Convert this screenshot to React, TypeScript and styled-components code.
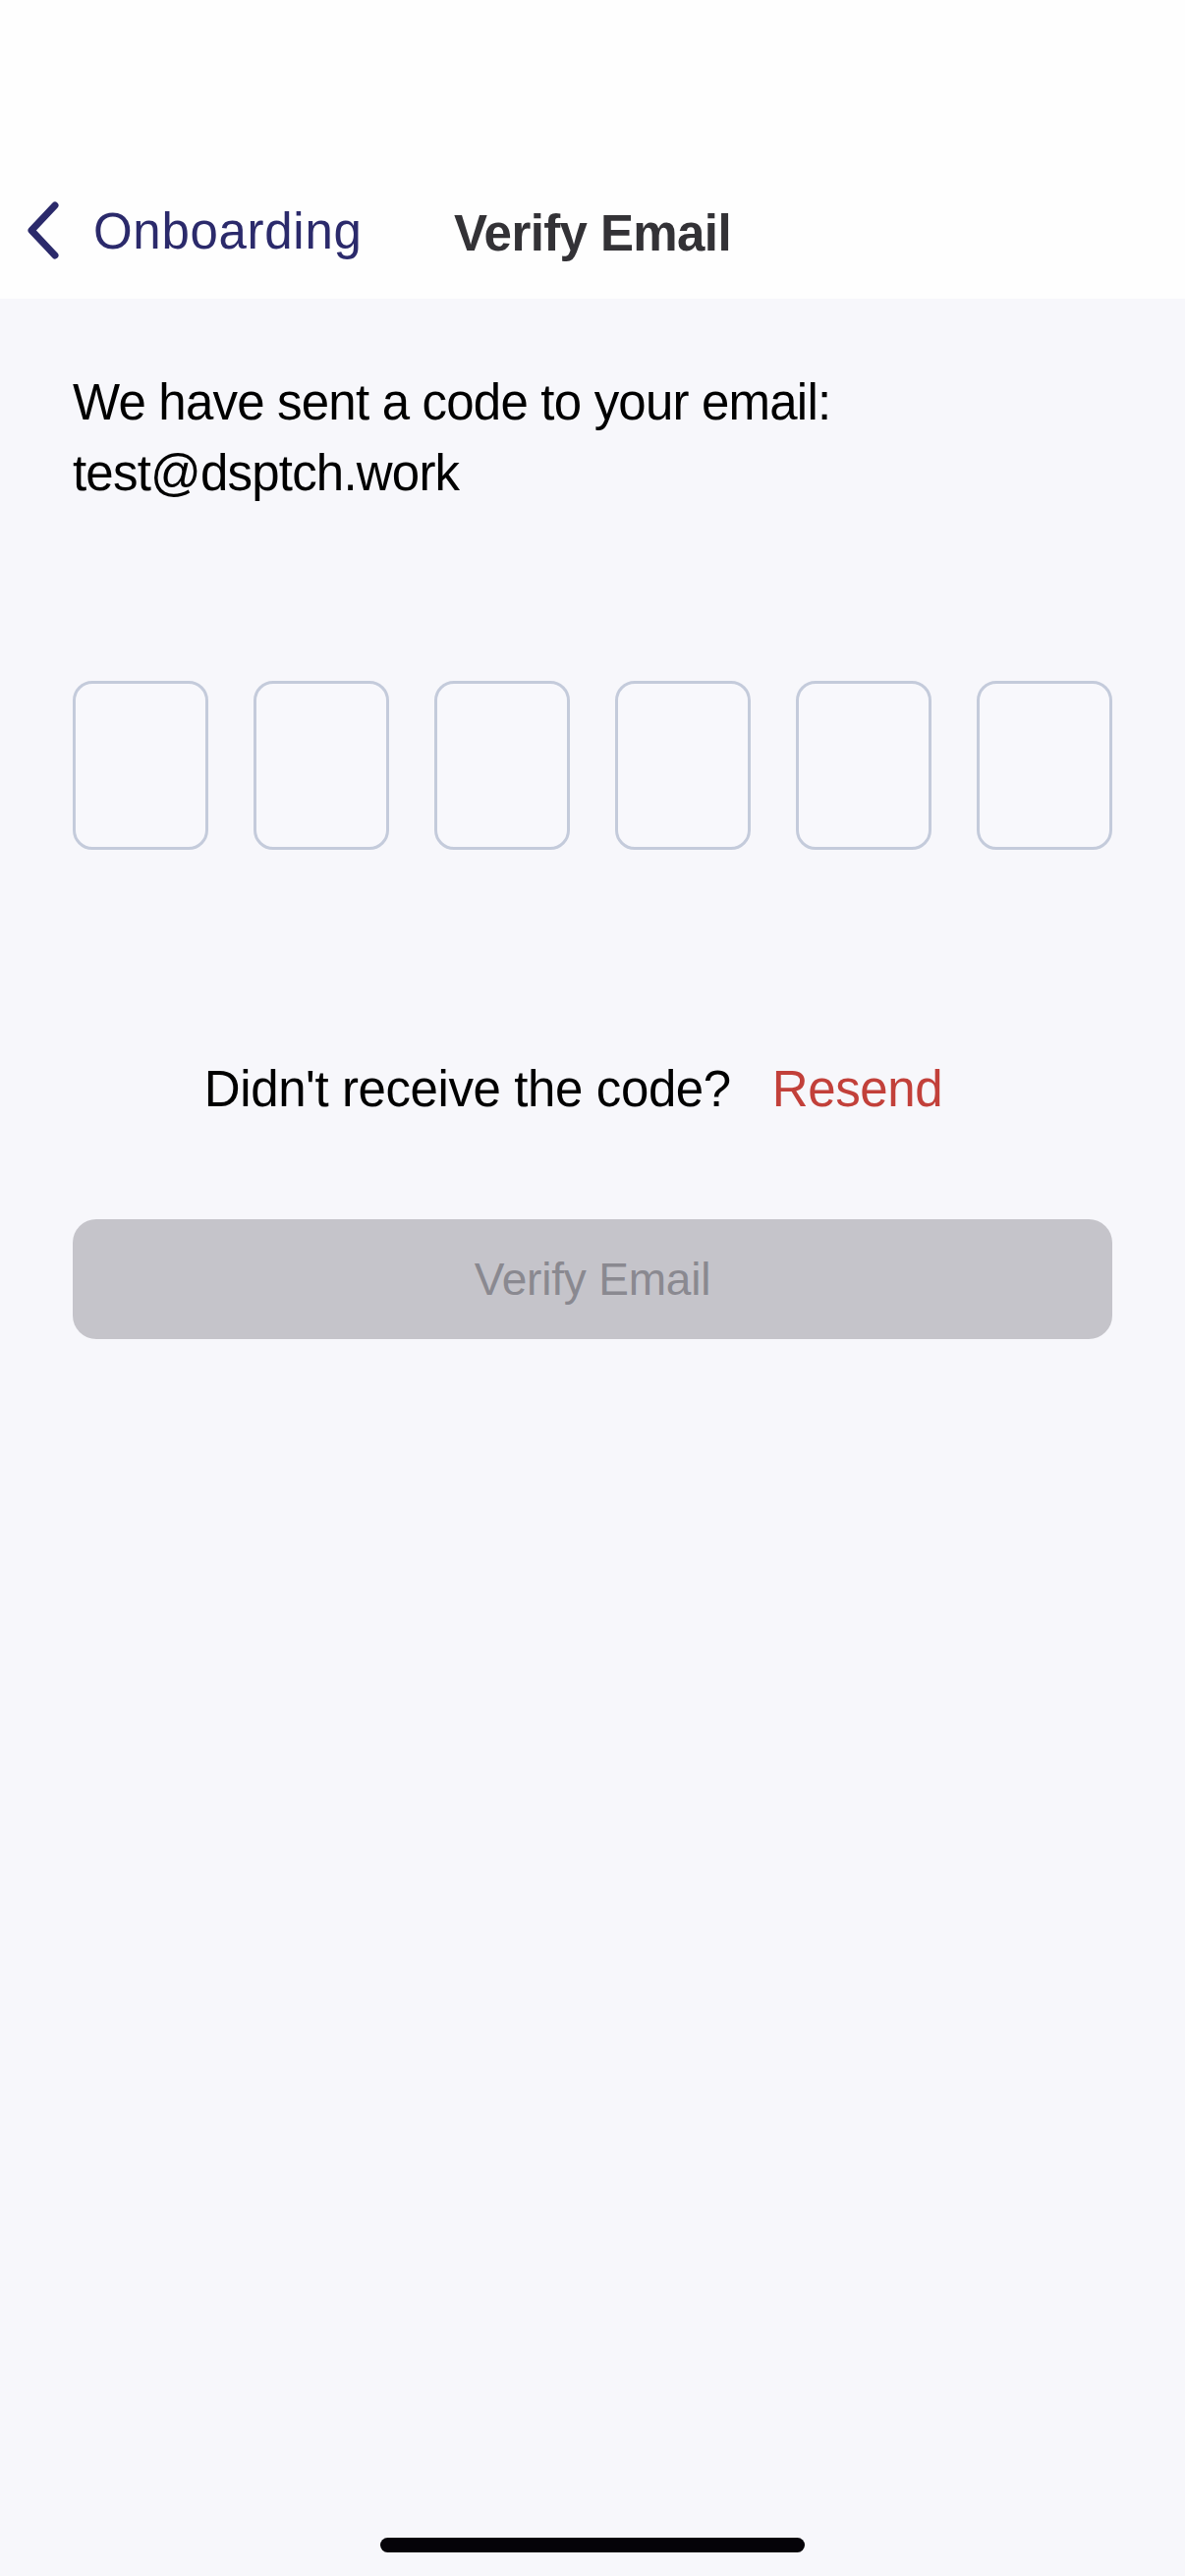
import styled, { createGlobalStyle } from "styled-components";

const GlobalStyle = createGlobalStyle`
  html, body {
    margin: 0;
    padding: 0;
    background: #f7f7fb;
  }
  * {
    box-sizing: border-box;
  }
`;

const CODE_LENGTH = 6;

export default function App() {
  const cells = Array.from({ length: CODE_LENGTH }, (_, i) => i);

  return (
    <>
      <GlobalStyle />
      <Screen>
        <Header>
          <NavBar>
            <BackButton>
              <svg width="40" height="60" viewBox="0 0 40 60" fill="none">
                <path
                  d="M32 4 L8 29.5 L32 55"
                  stroke="#2b2a6b"
                  strokeWidth="7"
                  strokeLinecap="round"
                  strokeLinejoin="round"
                />
              </svg>
              <BackLabel>Onboarding</BackLabel>
            </BackButton>
            <Title>Verify Email</Title>
            <span />
          </NavBar>
        </Header>

        <Content>
          <Message>
            We have sent a code to your email:
            <br />
            test@dsptch.work
          </Message>

          <CodeRow>
            {cells.map((i) => (
              <CodeCell key={i} />
            ))}
          </CodeRow>

          <ResendRow>
            <ResendText>Didn't receive the code?</ResendText>
            <ResendLink>Resend</ResendLink>
          </ResendRow>

          <VerifyButton disabled>Verify Email</VerifyButton>
        </Content>

        <HomeIndicator />
      </Screen>
    </>
  );
}

const Screen = styled.div`
  width: 1206px;
  min-height: 2622px;
  display: flex;
  flex-direction: column;
  background: #f7f7fb;
  font-family: "Liberation Sans", Arial, sans-serif;
`;

const Header = styled.header`
  background: #fefefe;
  padding-top: 170px;
  height: 304px;
`;

const NavBar = styled.div`
  height: 134px;
  display: grid;
  grid-template-columns: 1fr auto 1fr;
  align-items: center;
`;

const BackButton = styled.button`
  display: flex;
  align-items: center;
  gap: 31px;
  padding: 0 0 0 24px;
  margin: -4px 0 0;
  border: none;
  background: none;
  justify-self: start;
  cursor: pointer;
`;

const BackLabel = styled.span`
  font-family: "Liberation Sans", Arial, sans-serif;
  font-size: 51px;
  color: #2b2a6b;
  letter-spacing: 0.7px;
`;

const Title = styled.h1`
  margin: 0;
  font-size: 51px;
  font-weight: 700;
  color: #333236;
  letter-spacing: -0.6px;
`;

const Content = styled.main`
  flex: 1;
  padding: 70px 74px 0;
  display: flex;
  flex-direction: column;
`;

const Message = styled.p`
  margin: 0;
  font-size: 51px;
  line-height: 72px;
  letter-spacing: -0.8px;
  color: #000000;
`;

const CodeRow = styled.div`
  margin-top: 175px;
  display: grid;
  grid-template-columns: repeat(6, 1fr);
  gap: 46px;
`;

const CodeCell = styled.div`
  height: 172px;
  border: 3px solid #c4cbdb;
  border-radius: 20px;
  background: #f8f8fc;
`;

const ResendRow = styled.div`
  margin-top: 209px;
  display: flex;
  justify-content: center;
  align-items: baseline;
  gap: 42px;
  padding-right: 39px;
  line-height: 70px;
`;

const ResendText = styled.span`
  font-size: 51px;
  letter-spacing: -0.4px;
  color: #000000;
`;

const ResendLink = styled.button`
  border: none;
  background: none;
  padding: 0;
  font-family: "Liberation Sans", Arial, sans-serif;
  font-size: 51px;
  letter-spacing: -0.4px;
  color: #c2403a;
  cursor: pointer;
`;

const VerifyButton = styled.button`
  margin-top: 97px;
  height: 122px;
  width: 100%;
  border: none;
  border-radius: 24px;
  background: #c5c4ca;
  color: #8a8990;
  font-family: "Liberation Sans", Arial, sans-serif;
  font-size: 46px;
  letter-spacing: -0.2px;
`;

const HomeIndicator = styled.div`
  align-self: center;
  width: 432px;
  height: 15px;
  border-radius: 8px;
  background: #050308;
  margin-bottom: 24px;
`;
